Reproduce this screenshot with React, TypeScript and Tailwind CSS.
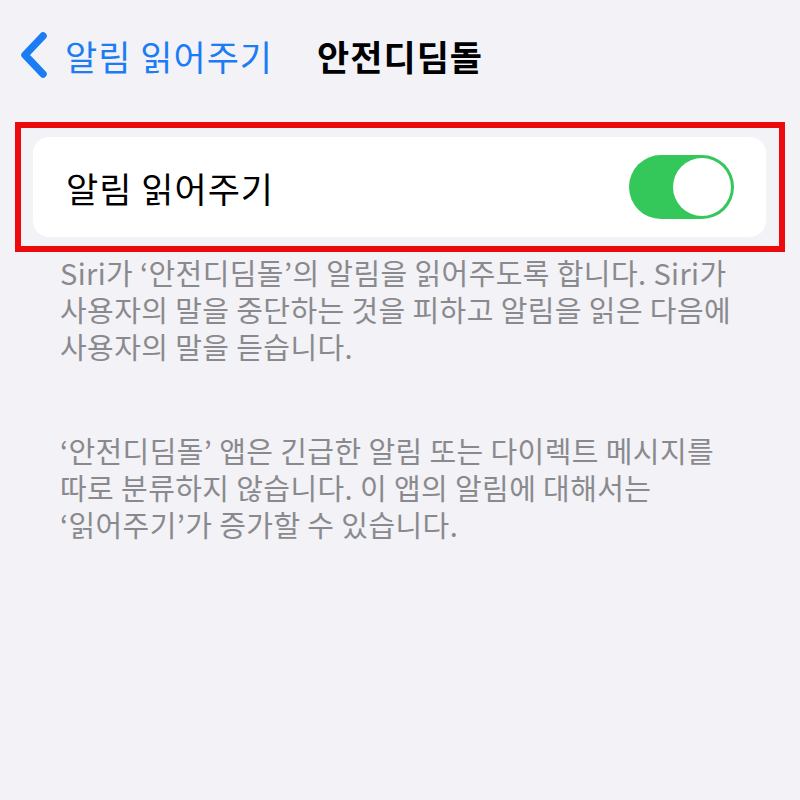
export default function App() {
  return (
    <div className="w-[800px] min-h-[800px] bg-[#f2f2f7] font-['Noto_Sans_CJK_KR','Noto_Sans',sans-serif]">
      {/* nav bar */}
      <header className="flex h-[110px] items-center pl-[20px]">
        <svg width="28" height="46" viewBox="0 0 28 46" className="shrink-0">
          <path d="M23 4 L5 23 L23 42" fill="none" stroke="#1c7cf4" strokeWidth="7.5" strokeLinecap="round" strokeLinejoin="round" />
        </svg>
        <span className="ml-[17px] text-[35px] leading-none tracking-[1px] text-[#1c7cf4]">알림 읽어주기</span>
        <span className="ml-[44px] text-[35px] font-bold leading-none tracking-[1px] text-black">안전디딤돌</span>
      </header>

      {/* highlighted row */}
      <div className="mx-[15px] mt-[12px] border-[6px] border-[#ec0a0c] pb-[9px] pl-[12px] pr-[13px] pt-[9px]">
        <div className="flex h-[100px] items-center justify-between rounded-[16px] bg-white pl-[33px] pr-[32px]">
          <span className="text-[35px] leading-none tracking-[1px] text-black">알림 읽어주기</span>
          <div className="flex h-[64px] w-[105px] items-center justify-end rounded-full bg-[#34c759] pr-[3px]">
            <div className="h-[58px] w-[58px] rounded-full bg-white" />
          </div>
        </div>
      </div>

      {/* footer notes */}
      <div className="mt-[2px] break-keep pl-[60px] text-[29px] leading-[37px] tracking-[0.4px] text-[#8a8a8e]">
        <p>
          Siri가 ‘안전디딤돌’의 알림을 읽어주도록 합니다. Siri가
          <br />
          사용자의 말을 중단하는 것을 피하고 알림을 읽은 다음에
          <br />
          사용자의 말을 듣습니다.
        </p>
        <p className="mt-[67px]">
          ‘안전디딤돌’ 앱은 긴급한 알림 또는 다이렉트 메시지를
          <br />
          따로 분류하지 않습니다. 이 앱의 알림에 대해서는
          <br />
          ‘읽어주기’가 증가할 수 있습니다.
        </p>
      </div>
    </div>
  );
}
